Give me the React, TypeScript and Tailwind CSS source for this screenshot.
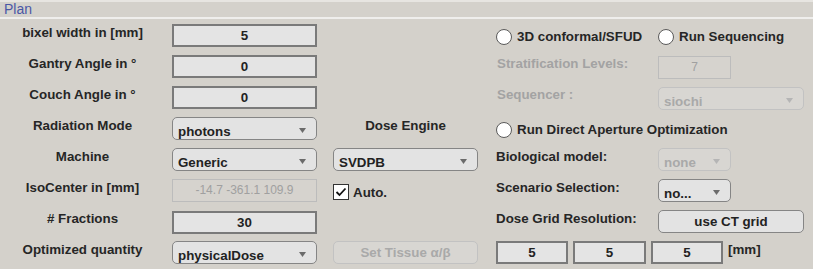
import React from 'react'

const font = { fontFamily: '"Liberation Sans", Arial, sans-serif' }

const Label = ({ children, dim, center }: { children: React.ReactNode; dim?: boolean; center?: boolean }) => (
  <div
    className={`pt-[1px] text-[13.33px] leading-[15px] font-bold whitespace-nowrap ${center ? 'text-center' : 'text-left'} ${
      dim ? 'text-[#a3a3a3]' : 'text-[#262626]'
    }`}
  >
    {children}
  </div>
)

const Edit = ({ value, dim, w = 'w-full' }: { value: string; dim?: boolean; w?: string }) => (
  <div
    className={`${w} h-[23px] flex items-center justify-center leading-[15px] ${
      dim
        ? 'border border-[#bcbcbc] bg-[#d6d3ce] text-[#a0a0a0] font-normal text-[12px]'
        : 'border-2 border-[#7a7a7a] bg-[#e4e4e4] text-[#222] font-bold text-[13.33px]'
    }`}
  >
    {value}
  </div>
)

const Arrow = ({ dim }: { dim?: boolean }) => (
  <svg width="7" height="5" viewBox="0 0 7 5" className="shrink-0 mt-[3px]">
    <path d="M0 0 H7 L3.5 5 Z" fill={dim ? '#b5b5b5' : '#6b6b6b'} />
  </svg>
)

const Select = ({ value, dim, w = 'w-full' }: { value: string; dim?: boolean; w?: string }) => (
  <div
    className={`${w} h-[23px] rounded-[5px] border flex items-center justify-between pl-[5px] pr-[10px] text-[13.33px] leading-[15px] font-bold ${
      dim ? 'border-[#c2c2c2] bg-[#d8d6d2] text-[#a9a9a9]' : 'border-[#858585] bg-[#e3e3e3] text-[#222]'
    }`}
  >
    <span className="pt-[5px]">{value}</span>
    <Arrow dim={dim} />
  </div>
)

const Radio = ({ label }: { label: string }) => (
  <div className="flex items-center gap-[5px] mt-[5px] h-[16px] text-[13.33px] leading-[16px] font-bold text-[#262626] whitespace-nowrap">
    <span className="w-[16px] h-[16px] rounded-full border border-[#5a5a5a] bg-white shrink-0" />
    <span>{label}</span>
  </div>
)

export default function App() {
  return (
    <div className="w-[813px] h-[269px] bg-[#d4d1cb] overflow-hidden leading-[15px]" style={font}>
      {/* title bar */}
      <div className="h-[19px] border-t-2 border-t-[#e7e5e1] border-b-2 border-b-[#efeeec] pl-[4px] text-[14px] leading-[14px] text-[#4a57a6]">
        Plan
      </div>

      <div className="grid grid-cols-[172px_145px_16px_145px_18px_162px_146px] grid-rows-[repeat(8,31px)] pt-[5px]">
        {/* row 0 */}
        <div className="pr-[7px]"><Label center>bixel width in [mm]</Label></div>
        <Edit value="5" />
        <div />
        <div />
        <div />
        <Radio label="3D conformal/SFUD" />
        <Radio label="Run Sequencing" />

        {/* row 1 */}
        <div className="pr-[7px]"><Label center>Gantry Angle in °</Label></div>
        <Edit value="0" />
        <div />
        <div />
        <div />
        <div className="pl-[1px]"><Label dim>Stratification Levels:</Label></div>
        <div className="pt-[1px]"><Edit value="7" dim w="w-[73px]" /></div>

        {/* row 2 */}
        <div className="pr-[7px]"><Label center>Couch Angle in °</Label></div>
        <Edit value="0" />
        <div />
        <div />
        <div />
        <div className="pl-[1px]"><Label dim>Sequencer :</Label></div>
        <div className="pt-[1px]"><Select value="siochi" dim /></div>

        {/* row 3 */}
        <div className="pr-[7px]"><Label center>Radiation Mode</Label></div>
        <Select value="photons" />
        <div />
        <Label center>Dose Engine</Label>
        <div />
        <div className="col-span-2"><Radio label="Run Direct Aperture Optimization" /></div>

        {/* row 4 */}
        <div className="pr-[7px]"><Label center>Machine</Label></div>
        <Select value="Generic" />
        <div />
        <Select value="SVDPB" />
        <div />
        <Label>Biological model:</Label>
        <Select value="none" dim w="w-[73px]" />

        {/* row 5 */}
        <div className="pr-[7px]"><Label center>IsoCenter in [mm]</Label></div>
        <Edit value="-14.7 -361.1 109.9" dim />
        <div />
        <div className="flex items-center gap-[4px] pt-[3px] h-[23px] text-[13.33px] font-bold text-[#262626]">
          <span className="w-[16px] h-[16px] border border-[#333] bg-white flex items-center justify-center">
            <svg width="12" height="10" viewBox="0 0 12 10">
              <path d="M1.5 5 L4.5 8 L10.5 1.5" fill="none" stroke="#111" strokeWidth="1.8" />
            </svg>
          </span>
          <span>Auto.</span>
        </div>
        <div />
        <Label>Scenario Selection:</Label>
        <Select value="no..." w="w-[73px]" />

        {/* row 6 */}
        <div className="pr-[7px]"><Label center># Fractions</Label></div>
        <div className="pt-[1px]"><Edit value="30" /></div>
        <div />
        <div />
        <div />
        <Label>Dose Grid Resolution:</Label>
        <div className="h-[23px] rounded-[5px] border border-[#858585] bg-[#e3e3e3] flex items-center justify-center text-[13.33px] font-bold text-[#222]">
          use CT grid
        </div>

        {/* row 7 */}
        <div className="pr-[7px]"><Label center>Optimized quantity</Label></div>
        <Select value="physicalDose" />
        <div />
        <div className="h-[23px] rounded-[5px] border border-[#c2c2c2] bg-[#d8d6d2] flex items-center justify-center text-[13.33px] font-bold text-[#a9a9a9]">
          Set Tissue α/β
        </div>
        <div />
        <div className="col-span-2 flex gap-[5px]">
          <Edit value="5" w="w-[72px]" />
          <Edit value="5" w="w-[73px]" />
          <Edit value="5" w="w-[72px]" />
          <span className="pt-[1px] text-[13.33px] font-bold text-[#262626]">[mm]</span>
        </div>
      </div>
    </div>
  )
}
